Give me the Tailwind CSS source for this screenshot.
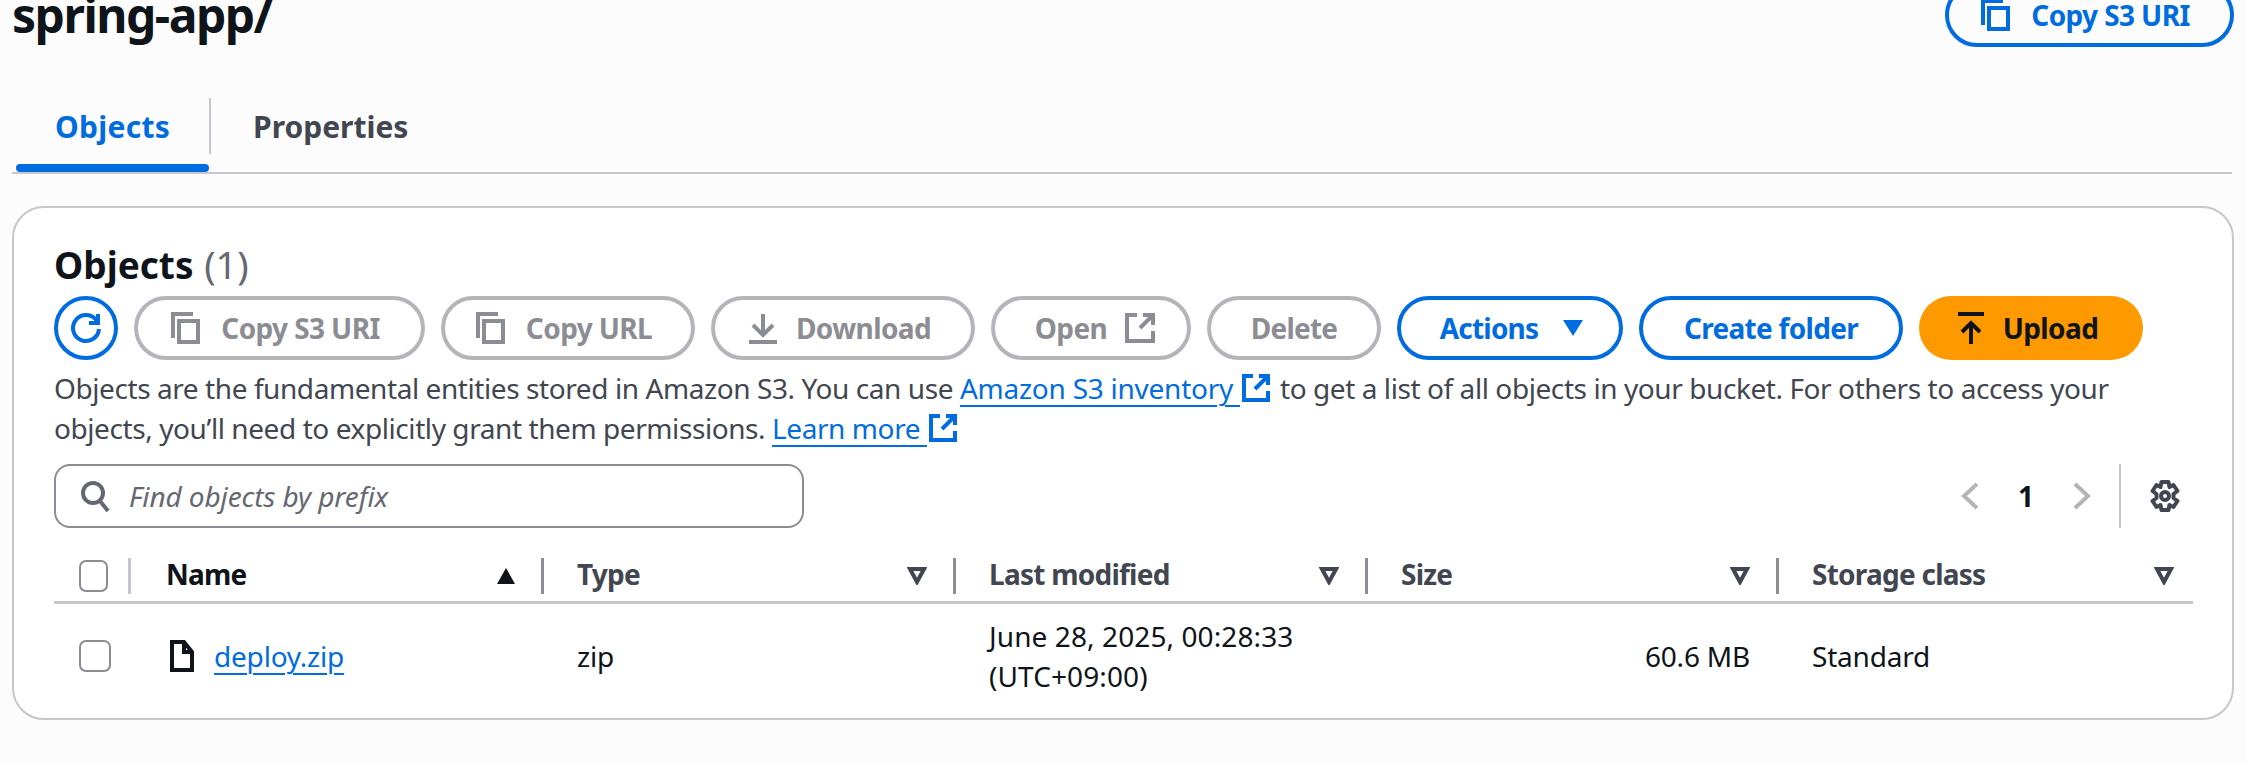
<!DOCTYPE html>
<html lang="en"><head><meta charset="utf-8"><title>spring-app/</title>
<script src="https://cdn.jsdelivr.net/npm/@tailwindcss/browser@4"></script></head>
<body class="bg-[#fcfcfc] overflow-hidden h-[764px] font-['Noto_Sans',sans-serif] text-[#0f141a]">
<div class="px-[12px] w-[2246px] h-[764px]">
  <header class="flex justify-between items-start -mt-[17px] h-[64px]">
    <h1 class="text-[48px] leading-[60px] font-bold tracking-[-1.5px] mt-[2px] text-[#0f141a]">spring-app/</h1>
    <button class="h-[64px] w-[289px] pr-[8px] rounded-[32px] border-[4px] border-[#006ce0] text-[#006ce0] flex items-center justify-center gap-[18px] text-[28px] font-bold tracking-[-0.6px]">
      <svg class="w-[32px] h-[32px] shrink-0" viewBox="0 0 32 32" fill="none" stroke="currentColor" stroke-width="4"><path d="M2 26V2h20"/><path d="M8 9h19v21H8z"/></svg>Copy S3 URI</button>
  </header>
  <nav class="mt-[51px] h-[76px] border-b-[2px] border-[#c6c6cd] flex w-[2220px]">
    <div class="w-[193px] ml-[4px] h-[74px] flex flex-col">
      <div class="h-[66px] pb-[10px] flex items-center justify-center text-[#006ce0] text-[30px] font-bold tracking-[0.3px]">Objects</div>
      <div class="h-[8px] rounded-[4px] bg-[#006ce0]"></div>
    </div>
    <div class="w-[2px] bg-[#c6c6cd] h-[56px]"></div>
    <div class="ml-[42px] h-[56px] flex items-center text-[30px] font-bold text-[#424650]">Properties</div>
  </nav>
  <main class="mt-[32px] w-[2222px] h-[514px] rounded-[32px] border-[2px] border-[#c6c6cd] bg-white px-[40px]">
    <h2 class="mt-[35px] h-[42px] text-[37px] leading-[42px] font-bold text-[#0f141a]">Objects <span class="ml-[1px] font-normal text-[38px] text-[#656871]">(1)</span></h2>
    <div class="mt-[11px] flex gap-[16px] items-center">
      <button class="w-[64px] h-[64px] rounded-full border-[4px] border-[#006ce0] text-[#006ce0] flex items-center justify-center">
        <svg class="w-[32px] h-[32px]" viewBox="0 0 32 32" fill="none" stroke="currentColor" stroke-width="4"><path d="M27 9a13 13 0 1 0 2 8"/><path d="M28 2v9h-9"/></svg></button>
      <button class="w-[291px] h-[64px] pr-[8px] rounded-[32px] border-[4px] border-[#b4b4bb] text-[#8c8c94] flex items-center justify-center gap-[18px] text-[28px] font-bold tracking-[-0.6px]">
        <svg class="w-[32px] h-[32px] shrink-0" viewBox="0 0 32 32" fill="none" stroke="currentColor" stroke-width="4"><path d="M2 26V2h20"/><path d="M8 9h19v21H8z"/></svg>Copy S3 URI</button>
      <button class="w-[254px] h-[64px] pr-[8px] rounded-[32px] border-[4px] border-[#b4b4bb] text-[#8c8c94] flex items-center justify-center gap-[18px] text-[28px] font-bold tracking-[-0.6px]">
        <svg class="w-[32px] h-[32px] shrink-0" viewBox="0 0 32 32" fill="none" stroke="currentColor" stroke-width="4"><path d="M2 26V2h20"/><path d="M8 9h19v21H8z"/></svg>Copy URL</button>
      <button class="w-[264px] h-[64px] pr-[7px] rounded-[32px] border-[4px] border-[#b4b4bb] text-[#8c8c94] flex items-center justify-center gap-[18px] text-[28px] font-bold tracking-[-0.6px]">
        <svg class="w-[30px] h-[32px] shrink-0" viewBox="0 0 30 32" fill="none" stroke="currentColor" stroke-width="4"><path d="M15 2v20M5 13l10 10 10-10M1 30h28"/></svg>Download</button>
      <button class="w-[200px] h-[64px] pl-[8px] rounded-[32px] border-[4px] border-[#b4b4bb] text-[#8c8c94] flex items-center justify-center gap-[18px] text-[28px] font-bold tracking-[-0.6px]">Open
        <svg class="w-[30px] h-[30px] shrink-0" viewBox="0 0 30 30" fill="none" stroke="currentColor" stroke-width="4"><path d="M12 2H2v26h26V18"/><path d="M15 15L28 2M18 2h10v10"/></svg></button>
      <button class="w-[174px] h-[64px] rounded-[32px] border-[4px] border-[#b4b4bb] text-[#8c8c94] flex items-center justify-center text-[28px] font-bold tracking-[-0.8px]">Delete</button>
      <button class="w-[226px] h-[64px] pl-[4px] rounded-[32px] border-[4px] border-[#006ce0] text-[#006ce0] flex items-center justify-center gap-[24px] text-[28px] font-bold tracking-[-0.8px]">Actions
        <svg class="w-[22px] h-[18px] shrink-0" viewBox="0 0 22 18" fill="currentColor"><path d="M1 1h20L11 17z"/></svg></button>
      <button class="w-[264px] h-[64px] rounded-[32px] border-[4px] border-[#006ce0] text-[#006ce0] flex items-center justify-center text-[28px] font-bold tracking-[-0.7px]">Create folder</button>
      <button class="w-[224px] h-[64px] pr-[7px] rounded-[32px] bg-[#ff9900] text-[#0f141a] flex items-center justify-center gap-[18px] text-[28px] font-bold tracking-[-0.6px]">
        <svg class="w-[28px] h-[32px] shrink-0" viewBox="0 0 28 32" fill="none" stroke="currentColor" stroke-width="4"><path d="M1 2h26M14 32V11M5 20l9-9 9 9"/></svg>Upload</button>
    </div>
    <p class="mt-[8px] w-[2090px] text-[28px] leading-[40px] text-[#424650] tracking-[-0.42px]">Objects are the fundamental entities stored in Amazon S3. You can use <a class="text-[#006ce0] underline underline-offset-[6px] decoration-[2px] tracking-[-0.25px]">Amazon S3 inventory&nbsp;</a><svg class="inline ml-[2px] mr-[3px] w-[28px] h-[28px] text-[#006ce0] align-[-3px]" viewBox="0 0 28 28" fill="none" stroke="currentColor" stroke-width="4"><path d="M11 2H2v24h24v-9"/><path d="M13 15L26 2M17 2h9v9"/></svg> to get a list of all objects in your bucket. For others to access your objects, you’ll need to explicitly grant them permissions. <a class="text-[#006ce0] underline underline-offset-[6px] decoration-[2px]">Learn more&nbsp;</a><svg class="inline ml-[2px] w-[28px] h-[28px] text-[#006ce0] align-[-3px]" viewBox="0 0 28 28" fill="none" stroke="currentColor" stroke-width="4"><path d="M11 2H2v24h24v-9"/><path d="M13 15L26 2M17 2h9v9"/></svg></p>
    <div class="mt-[16px] h-[64px] flex items-center">
      <label class="w-[750px] h-[64px] rounded-[16px] border-[2px] border-[#8c8c94] flex items-center px-[24px] gap-[19px]">
        <svg class="w-[30px] h-[32px] shrink-0 text-[#656871]" viewBox="0 0 30 32" fill="none" stroke="currentColor" stroke-width="4"><circle cx="13" cy="13" r="10"/><path d="M20 21l8 10"/></svg>
        <span class="text-[28px] italic text-[#656871] tracking-[-0.1px]">Find objects by prefix</span></label>
      <div class="ml-auto flex items-center">
        <svg class="w-[20px] h-[28px] text-[#b4b4bb]" viewBox="0 0 20 28" fill="none" stroke="currentColor" stroke-width="4"><path d="M17 2L4 14l13 12"/></svg>
        <span class="ml-[36px] w-[20px] text-center text-[28px] font-bold">1</span>
        <svg class="ml-[36px] w-[20px] h-[28px] text-[#b4b4bb]" viewBox="0 0 20 28" fill="none" stroke="currentColor" stroke-width="4"><path d="M3 2l13 12L3 26"/></svg>
        <div class="ml-[27px] w-[2px] h-[64px] bg-[#c6c6cd]"></div>
        <svg class="ml-[28px] mr-[11px] w-[32px] h-[32px] text-[#424650]" viewBox="0 0 32 32" fill="none" stroke="currentColor" stroke-width="4" stroke-linejoin="round"><path d="M12.5 2h7l1 5 4-2 4 6-4 3v4l4 3-4 6-4-2-1 5h-7l-1-5-4 2-4-6 4-3v-4l-4-3 4-6 4 2z"/><circle cx="16" cy="16" r="4"/></svg>
      </div>
    </div>
    <div class="mt-[10px] w-[2139px] h-[66px] border-b-[3px] border-[#c6c6cd] flex items-start pt-[20px] text-[28px] font-bold text-[#424650] tracking-[-0.75px]">
      <div class="w-[77px] h-[36px] flex items-center">
        <span class="ml-[25px] w-[32px] h-[32px] rounded-[7px] border-[2px] border-[#8c8c94] bg-white"></span>
        <span class="ml-[20px] w-[3px] h-[36px] bg-[#c6c6cd]"></span></div>
      <div class="w-[413px] h-[36px] pl-[35px] pr-[25px] flex items-center justify-between border-r-[3px] border-[#8c8c94] text-[#0f141a]"><span class="mb-[4px]">Name</span>
        <svg class="w-[20px] h-[18px]" viewBox="0 0 20 18" fill="currentColor"><path d="M10 1l9 16H1z"/></svg></div>
      <div class="w-[412px] h-[36px] pl-[33px] pr-[26px] flex items-center justify-between border-r-[3px] border-[#8c8c94]"><span class="mb-[4px]">Type</span>
        <svg class="w-[20px] h-[18px]" viewBox="0 0 20 18" fill="none" stroke="currentColor" stroke-width="4"><path d="M3 2h14L10 15z"/></svg></div>
      <div class="w-[412px] h-[36px] pl-[33px] pr-[26px] flex items-center justify-between border-r-[3px] border-[#8c8c94]"><span class="mb-[4px]">Last modified</span>
        <svg class="w-[20px] h-[18px]" viewBox="0 0 20 18" fill="none" stroke="currentColor" stroke-width="4"><path d="M3 2h14L10 15z"/></svg></div>
      <div class="w-[411px] h-[36px] pl-[33px] pr-[26px] flex items-center justify-between border-r-[3px] border-[#8c8c94]"><span class="mb-[4px]">Size</span>
        <svg class="w-[20px] h-[18px]" viewBox="0 0 20 18" fill="none" stroke="currentColor" stroke-width="4"><path d="M3 2h14L10 15z"/></svg></div>
      <div class="w-[414px] h-[36px] pl-[33px] pr-[19px] flex items-center justify-between"><span class="mb-[4px]">Storage class</span>
        <svg class="w-[20px] h-[18px]" viewBox="0 0 20 18" fill="none" stroke="currentColor" stroke-width="4"><path d="M3 2h14L10 15z"/></svg></div>
    </div>
    <div class="w-[2139px] h-[104px] flex items-center text-[28px] text-[#0f141a] tracking-[-0.2px]">
      <div class="w-[77px]"><span class="block ml-[25px] w-[32px] h-[32px] rounded-[7px] border-[2px] border-[#8c8c94] bg-white"></span></div>
      <div class="w-[413px] pl-[39px] flex items-center gap-[20px]">
        <svg class="w-[24px] h-[32px] shrink-0" viewBox="0 0 24 32" fill="none" stroke="currentColor" stroke-width="4"><path d="M2 2h12l8 10v18H2zM14 2v10h8"/></svg>
        <a class="text-[#006ce0] underline underline-offset-[6px] decoration-[2px]">deploy.zip</a></div>
      <div class="w-[412px] pl-[33px]">zip</div>
      <div class="w-[412px] pl-[33px] leading-[40px] tracking-[0.1px]">June 28, 2025, 00:28:33<br>(UTC+09:00)</div>
      <div class="w-[411px] pr-[29px] text-right">60.6 MB</div>
      <div class="w-[414px] pl-[33px]">Standard</div>
    </div>
  </main>
</div>
</body></html>
